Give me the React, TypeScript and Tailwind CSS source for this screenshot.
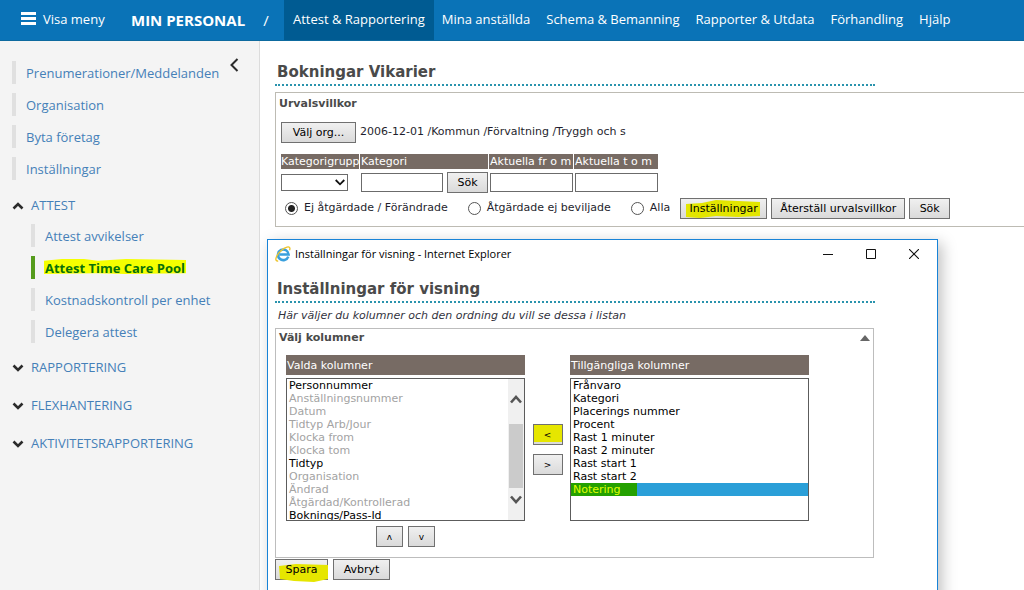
import { useState } from 'react';
import type { ReactNode } from 'react';
import clsx from 'clsx';

const topLinks = [
  'Attest & Rapportering',
  'Mina anställda',
  'Schema & Bemanning',
  'Rapporter & Utdata',
  'Förhandling',
  'Hjälp',
];

const shortcuts = ['Prenumerationer/Meddelanden', 'Organisation', 'Byta företag', 'Inställningar'];

const attestLinks = ['Attest avvikelser', 'Attest Time Care Pool', 'Kostnadskontroll per enhet', 'Delegera attest'];

const closedSections = ['RAPPORTERING', 'FLEXHANTERING', 'AKTIVITETSRAPPORTERING'];

const statuses = [
  { label: 'Ej åtgärdade / Förändrade', className: 'mr-5' },
  { label: 'Åtgärdade ej beviljade', className: 'mr-5' },
  { label: 'Alla', className: 'mr-[10px]' },
];

const chosenColumns = [
  { name: 'Personnummer', locked: false },
  { name: 'Anställningsnummer', locked: true },
  { name: 'Datum', locked: true },
  { name: 'Tidtyp Arb/Jour', locked: true },
  { name: 'Klocka from', locked: true },
  { name: 'Klocka tom', locked: true },
  { name: 'Tidtyp', locked: false },
  { name: 'Organisation', locked: true },
  { name: 'Ändrad', locked: true },
  { name: 'Åtgärdad/Kontrollerad', locked: true },
  { name: 'Boknings/Pass-Id', locked: false },
];

const availableColumns = [
  'Frånvaro',
  'Kategori',
  'Placerings nummer',
  'Procent',
  'Rast 1 minuter',
  'Rast 2 minuter',
  'Rast start 1',
  'Rast start 2',
  'Notering',
];

function Chevron({ up = false }: { up?: boolean }) {
  return (
    <svg width="12" height="8" viewBox="0 0 12 8" fill="none" stroke="#2b2b2b" strokeWidth="2.6" aria-hidden="true">
      <path d={up ? 'M1.5 6.5 6 2l4.5 4.5' : 'M1.5 1.5 6 6l4.5-4.5'} />
    </svg>
  );
}

function ExplorerIcon() {
  return (
    <svg width="16" height="16" viewBox="0 0 16 16" fill="none" aria-hidden="true">
      <path d="M13.3 10.6A5.3 5.3 0 1 1 13.6 8.5H4.5" stroke="#3aa0dd" strokeWidth="2.6" />
      <path
        d="M3.2 14.8C.8 15.5.2 13.5 1.6 10.5 3.4 6.5 8 2.2 12 1.1c2.7-.7 3.5.8 2.5 3.2"
        stroke="#eec52f"
        strokeWidth="1.4"
      />
    </svg>
  );
}

type ButtonProps = { children: ReactNode; className?: string; marker?: ReactNode; label?: string };

function Button({ children, className, marker, label }: ButtonProps) {
  return (
    <button
      type="button"
      aria-label={label}
      className={clsx(
        'relative h-[21px] shrink-0 border border-[#707070] bg-linear-to-b from-[#f0f0f0] to-[#dadada] text-[11px] leading-none text-black',
        className,
      )}
    >
      {marker}
      <span className="relative">{children}</span>
    </button>
  );
}

function Heading({ children }: { children: ReactNode }) {
  return (
    <h1 className="w-[600px] border-b-2 border-dotted border-[#2a93ad] pl-[2px] text-[15px] leading-6 font-bold text-[#4a4a4a]">
      {children}
    </h1>
  );
}

function TopBar() {
  return (
    <header className="flex h-[41px] shrink-0 items-stretch border-b border-[#0d6a9f] bg-[#0a73b7] font-['Open_Sans',sans-serif] text-[13px] text-white">
      <button type="button" className="flex w-[131px] items-center gap-[7px] pl-[21px]">
        <svg width="15" height="13" viewBox="0 0 15 13" fill="#fff" className="mb-1" aria-hidden="true">
          <path d="M0 0h15v3H0zM0 5h15v3H0zM0 10h15v3H0z" />
        </svg>
        Visa meny
      </button>
      <div className="flex w-[153px] items-center gap-[18px] text-[15px]">
        <span className="font-bold">MIN PERSONAL</span>
        <span>/</span>
      </div>
      <nav className="flex">
        {topLinks.map((link, i) => (
          <a
            key={link}
            href="#"
            className={clsx('flex items-center whitespace-nowrap', i === 0 ? 'bg-[#005b92] px-[9px]' : 'px-2')}
          >
            {link}
          </a>
        ))}
      </nav>
    </header>
  );
}

function Sidebar() {
  return (
    <aside className="relative w-[260px] shrink-0 border-r border-[#dcdcdc] bg-[#f4f4f4] pt-5 pl-3 font-['Open_Sans',sans-serif] text-[13px] text-[#4580b8]">
      <button type="button" aria-label="Dölj meny" className="absolute top-[17px] right-5">
        <svg width="9" height="14" viewBox="0 0 9 14" fill="none" stroke="#2b2b2b" strokeWidth="2" aria-hidden="true">
          <path d="M7.5 1 1.5 7l6 6" />
        </svg>
      </button>
      <ul className="flex flex-col gap-[9px]">
        {shortcuts.map((item) => (
          <li key={item} className="h-[23px] border-l-4 border-[#e0e0e0] pl-[10px] leading-6">
            <a href="#">{item}</a>
          </li>
        ))}
      </ul>

      <button type="button" className="mt-[14px] flex h-6 items-center gap-[7px]">
        <Chevron up />
        ATTEST
      </button>
      <ul className="mt-[6px] ml-[19px] flex flex-col gap-[9px]">
        {attestLinks.map((item, i) => (
          <li
            key={item}
            className={clsx('h-[23px] border-l-4 pl-[10px] leading-6', i === 1 ? 'border-[#559b1c]' : 'border-[#e0e0e0]')}
          >
            {i === 1 ? (
              <a href="#" className="relative font-bold text-[#08700a]">
                <svg
                  className="absolute top-0 -left-px h-4 w-[142px]"
                  viewBox="0 0 142 18"
                  preserveAspectRatio="none"
                  fill="#f5ff00"
                  aria-hidden="true"
                >
                  <path d="M0 2 18 0h22l14 2 28-2 60 1v15l-60 1-30-1-52 1z" />
                </svg>
                <span className="relative">{item}</span>
              </a>
            ) : (
              <a href="#">{item}</a>
            )}
          </li>
        ))}
      </ul>

      <div className="mt-[13px] flex flex-col items-start gap-[14px]">
        {closedSections.map((section) => (
          <button key={section} type="button" className="flex h-6 items-center gap-[7px]">
            <Chevron />
            {section}
          </button>
        ))}
      </div>
    </aside>
  );
}

function FilterPanel() {
  const [status, setStatus] = useState(0);
  const head = 'block h-[15px] bg-[#776b64] leading-4 text-white whitespace-nowrap';
  const box = 'ml-px mt-px h-[19px] border border-[#6b6b6b] bg-white px-1';

  return (
    <section className="-mr-4 mt-[6px] h-[135px] border border-[#bdbbb3] pt-1 pl-[5px] text-[#1f1f2e]">
      <h2 className="-ml-[2px] leading-[14px] font-bold text-[#4a4a4a]">Urvalsvillkor</h2>
      <div className="mt-[11px] flex items-center gap-1">
        <Button className="w-[75px]">Välj org...</Button>
        <span>2006-12-01 /Kommun /Förvaltning /Tryggh och s</span>
      </div>

      <div className="mt-[11px] grid grid-cols-[78px_128px_84px_84px] gap-x-px gap-y-[3px]">
        <label htmlFor="group" className={head}>Kategorigrupp</label>
        <label htmlFor="category" className={clsx(head, 'pl-px')}>Kategori</label>
        <label htmlFor="from" className={clsx(head, 'pl-px')}>Aktuella fr o m</label>
        <label htmlFor="to" className={clsx(head, 'pl-px')}>Aktuella t o m</label>

        <div className="relative mt-[2px] h-[17px] w-[67px]">
          <select id="group" className="h-full w-full appearance-none border border-[#6b6b6b] bg-white">
            <option></option>
          </select>
          <svg
            className="pointer-events-none absolute top-[5px] right-[3px]"
            width="10"
            height="7"
            viewBox="0 0 10 7"
            fill="none"
            stroke="#111"
            strokeWidth="1.8"
            aria-hidden="true"
          >
            <path d="M.7 1 5 5.3 9.3 1" />
          </svg>
        </div>
        <div className="flex gap-1">
          <input id="category" type="text" className={clsx(box, 'w-[82px]')} />
          <Button className="w-[41px]">Sök</Button>
        </div>
        <input id="from" type="text" className={clsx(box, 'w-[83px]')} />
        <input id="to" type="text" className={clsx(box, 'w-[83px]')} />
      </div>

      <div className="mt-[5px] flex h-[21px] items-center">
        <fieldset className="flex items-center pl-1">
          {statuses.map((item, i) => (
            <label key={item.label} className={clsx('flex items-center gap-[6px] whitespace-nowrap', item.className)}>
              <input
                type="radio"
                name="status"
                checked={status === i}
                onChange={() => setStatus(i)}
                className="size-[13px] appearance-none rounded-full border border-[#555] bg-white checked:bg-[radial-gradient(circle,#222_3px,#fff_4px)]"
              />
              {item.label}
            </label>
          ))}
        </fieldset>
        <div className="flex gap-1">
          <Button
            className="w-[87px]"
            marker={
              <svg className="absolute top-0 left-[5px]" width="74" height="19" viewBox="0 0 74 19" fill="#e3e600" aria-hidden="true">
                <path d="M0 5 16 4 30 1l22 1 22 1v14l-22 1-22-1-16 2-14-1z" />
              </svg>
            }
          >
            Inställningar
          </Button>
          <Button className="w-[134px]">Återställ urvalsvillkor</Button>
          <Button className="w-[41px]">Sök</Button>
        </div>
      </div>
    </section>
  );
}

function ColumnLists() {
  const head = 'mb-[3px] block h-5 bg-[#776b64] px-px leading-[22px] text-white';
  const list = 'block h-[143px] w-full overflow-hidden border border-[#5c5c5c] bg-white text-[11px] text-black';
  const row = 'h-[13px] min-h-[13px] px-[2px] py-0 leading-[13px]';

  return (
    <div className="flex pl-[10px]">
      <div className="w-[239px]">
        <label htmlFor="chosen" className={head}>Valda kolumner</label>
        <div className="relative">
          <select id="chosen" multiple size={11} className={list}>
            {chosenColumns.map((column) => (
              <option key={column.name} className={clsx(row, column.locked ? 'text-[#a3a3a3]' : 'text-black')}>
                {column.name}
              </option>
            ))}
          </select>
          {/* Rullningslist */}
          <div className="absolute inset-y-px right-px flex w-4 flex-col items-center justify-between bg-[#f0f0f0] py-4">
            <svg width="12" height="9" viewBox="0 0 12 9" fill="none" stroke="#555" strokeWidth="2.6" aria-hidden="true">
              <path d="M1 7.5 6 2l5 5.5" />
            </svg>
            <div className="mt-5 mb-[7px] w-[14px] grow bg-[#cbcbcb]" />
            <svg width="12" height="9" viewBox="0 0 12 9" fill="none" stroke="#555" strokeWidth="2.6" aria-hidden="true">
              <path d="M1 1.5 6 7l5-5.5" />
            </svg>
          </div>
        </div>
        <div className="mt-[5px] flex justify-center gap-[5px]">
          <Button className="w-[27px]" label="Flytta upp">
            <span className="text-[9px]">ʌ</span>
          </Button>
          <Button className="w-[27px]" label="Flytta ner">
            <span className="text-[9px]">v</span>
          </Button>
        </div>
      </div>

      <div className="flex w-[45px] flex-col items-center gap-[9px] pt-[69px]">
        <Button
          className="w-[30px]"
          label="Lägg till"
          marker={<span className="absolute inset-x-0 top-0 bottom-[2px] bg-[#e6e600]" />}
        >
          <span className="text-[9px]">&lt;</span>
        </Button>
        <Button className="w-[30px]" label="Ta bort">
          <span className="text-[9px]">&gt;</span>
        </Button>
      </div>

      <div className="w-[239px]">
        <label htmlFor="available" className={head}>Tillgängliga kolumner</label>
        <select id="available" multiple size={11} defaultValue={['Notering']} className={list}>
          {availableColumns.map((name) => (
            <option
              key={name}
              className={clsx(
                row,
                'checked:bg-[linear-gradient(90deg,#24a000_66px,#2a9fd8_66px)] checked:[-webkit-text-fill-color:#e0ff00]',
              )}
            >
              {name}
            </option>
          ))}
        </select>
      </div>
    </div>
  );
}

function SettingsWindow() {
  return (
    <div
      role="dialog"
      aria-label="Inställningar för visning"
      className="absolute top-[198px] left-[7px] h-[420px] w-[671px] border border-[#1883d7] bg-white px-[7px] shadow-[4px_4px_14px_rgba(0,0,0,0.25)]"
    >
      <div className="flex h-7 items-center justify-between pr-[11px] font-['Open_Sans',sans-serif] text-[11px] text-black">
        <div className="flex items-center gap-1">
          <ExplorerIcon />
          Inställningar för visning - Internet Explorer
        </div>
        <div className="flex items-center gap-[33px]">
          <button type="button" aria-label="Minimera">
            <svg width="10" height="10" viewBox="0 0 10 10" stroke="#111" aria-hidden="true">
              <path d="M0 5.5h10" />
            </svg>
          </button>
          <button type="button" aria-label="Maximera">
            <svg width="10" height="10" viewBox="0 0 10 10" fill="none" stroke="#111" aria-hidden="true">
              <path d="M.5.5h9v9h-9z" />
            </svg>
          </button>
          <button type="button" aria-label="Stäng">
            <svg width="10" height="10" viewBox="0 0 10 10" stroke="#111" strokeWidth="1.1" aria-hidden="true">
              <path d="m0 0 10 10M10 0 0 10" />
            </svg>
          </button>
        </div>
      </div>

      <div className="mt-[9px]">
        <Heading>Inställningar för visning</Heading>
      </div>
      <p className="mt-[5px] pl-[3px] leading-4 text-[#333340] italic">
        Här väljer du kolumner och den ordning du vill se dessa i listan
      </p>
      <section className="mt-1 h-[230px] w-[599px] border border-[#bdbdbd]">
        <div className="mb-[8px] flex h-[18px] items-center justify-between px-[3px]">
          <h2 className="font-bold text-[#4a4a4a]">Välj kolumner</h2>
          <button type="button" aria-label="Fäll ihop">
            <svg width="10" height="6" viewBox="0 0 10 6" fill="#666" aria-hidden="true">
              <path d="M0 6 5 0l5 6z" />
            </svg>
          </button>
        </div>
        <ColumnLists />
      </section>
      <div className="mt-px flex gap-[5px]">
        <Button
          className="w-[53px]"
          marker={
            <svg className="absolute top-[3px] left-[2px]" width="50" height="20" viewBox="0 0 50 20" fill="#e6e600" aria-hidden="true">
              <path d="M1 3 18 1l32 1v14l-14 3-20-1-14-2z" />
            </svg>
          }
        >
          Spara
        </Button>
        <Button className="w-[57px]">Avbryt</Button>
      </div>
    </div>
  );
}

export default function App() {
  return (
    <div className="flex h-screen flex-col overflow-hidden bg-white font-['DejaVu_Sans',Verdana,sans-serif] text-[11px]">
      <TopBar />
      <div className="flex min-h-0 grow">
        <Sidebar />
        <main className="relative min-w-0 grow overflow-hidden pt-[19px] pl-[15px]">
          <Heading>Bokningar Vikarier</Heading>
          <FilterPanel />
          <SettingsWindow />
        </main>
      </div>
    </div>
  );
}
